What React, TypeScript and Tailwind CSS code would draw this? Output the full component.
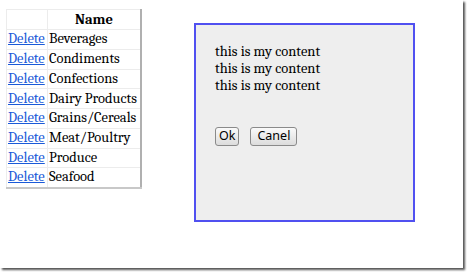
import React from 'react';

const categories = [
  'Beverages',
  'Condiments',
  'Confections',
  'Dairy Products',
  'Grains/Cereals',
  'Meat/Poultry',
  'Produce',
  'Seafood',
];

export default function App() {
  return (
    <div className="w-[467px] h-[272px] bg-white overflow-hidden">
      <div className="relative w-[463px] h-[268px] bg-white shadow-[2px_2px_2px_#555] font-serif [font-family:Liberation_Serif,Times_New_Roman,serif] text-[14.5px] text-black">
        <div className="flex pl-[6px] pt-[9px]">
          <table className="self-start table-fixed w-[136px] border-collapse border-l border-t border-[#e3e3e3] border-r-2 border-r-[#b0b0b0] border-b-2 border-b-[#c8c8c8] leading-[18px]">
            <thead>
              <tr>
                <th className="w-[41px] h-[20px] p-0 border border-[#ececec]"></th>
                <th className="h-[20px] p-0 border border-[#ececec] font-bold text-center">Name</th>
              </tr>
            </thead>
            <tbody>
              {categories.map((c) => (
                <tr key={c}>
                  <td className="h-[19.75px] border border-[#ececec] p-0 pl-[1px]">
                    <a href="#" className="text-[#1a5ad8] underline">Delete</a>
                  </td>
                  <td className="h-[19.75px] border border-[#ececec] p-0 pl-[1px] whitespace-nowrap">{c}</td>
                </tr>
              ))}
            </tbody>
          </table>
          <div className="ml-[52px] mt-[14px] w-[221px] h-[199px] border-2 border-[#5050f0] bg-[#eeeeee] pl-[19px] pt-[18px]">
            <div className="leading-[17px]">
              <div>this is my content</div>
              <div>this is my content</div>
              <div>this is my content</div>
            </div>
            <div className="flex gap-[11px] mt-[33px] font-sans [font-family:Liberation_Sans,Arial,sans-serif] text-[12.5px]">
              <button className="h-[19px] px-[3px] border border-[#8a8a8a] rounded-[3px] bg-gradient-to-b from-[#fafafa] to-[#dcdcdc] leading-none">Ok</button>
              <button className="h-[19px] px-[6px] border border-[#8a8a8a] rounded-[3px] bg-gradient-to-b from-[#fafafa] to-[#dcdcdc] leading-none">Canel</button>
            </div>
          </div>
        </div>
      </div>
    </div>
  );
}
